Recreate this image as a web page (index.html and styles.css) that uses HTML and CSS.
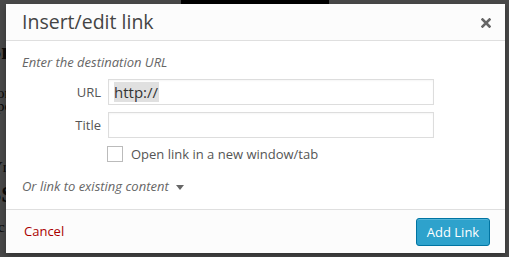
FILE: index.html
```html
<!DOCTYPE html>
<html lang="en">
<head>
    <meta charset="UTF-8">
    <meta name="viewport" content="width=device-width, initial-scale=1.0">
    <title>Insert/edit link</title>
    <link rel="stylesheet" href="styles.css">
</head>
<body>
    <div class="page">
        <div class="topbar"></div>
        <h2 class="page-head">Sn</h2>
        <p class="page-line l1">one of the things that nobody tells you about</p>
        <p class="page-line l2">poi</p>
        <p class="page-line l3">Yrs</p>
        <h2 class="page-head h2">SS</h2>
        <p class="page-line l4">c question is just one of those things</p>
        <p class="page-line l5">T publish the post for them in time for. Avoid using three hyphens to form a dash because</p>
    </div>
    <div class="backdrop"></div>

    <div class="dialog">
        <div class="dialog-head">
            <h1>Insert/edit link</h1>
            <span class="close">
                <svg width="10" height="10" viewBox="0 0 10 10">
                    <path d="M1.5 1.5 L8.5 8.5 M8.5 1.5 L1.5 8.5" stroke="#666" stroke-width="2.6" stroke-linecap="square"/>
                </svg>
            </span>
        </div>
        <div class="dialog-body">
            <p class="hint">Enter the destination URL</p>
            <div class="row">
                <label>URL</label>
                <div class="field"><span class="selected">http://</span></div>
            </div>
            <div class="row">
                <label>Title</label>
                <div class="field"></div>
            </div>
            <div class="row check-row">
                <span class="check"></span>
                <span>Open link in a new window/tab</span>
            </div>
            <p class="toggle">Or link to existing content <span class="arrow"></span></p>
        </div>
        <div class="dialog-foot">
            <a class="cancel">Cancel</a>
            <button class="btn">Add Link</button>
        </div>
    </div>
</body>
</html>
```

FILE: styles.css
```css
body,h1,h2,p{
    margin: 0;
    padding: 0;
}
body{
    width: 509px;
    height: 257px;
    overflow: hidden;
    position: relative;
    background: #f1f1f1;
    font-family: "Open Sans", "Noto Sans", sans-serif;
}
.page{
    font-family: "Liberation Serif", serif;
    color: #222;
    width: 509px;
    height: 257px;
    overflow: hidden;
}
.topbar{
    width: 148px;
    height: 4px;
    margin-left: 181px;
    background: #000;
}
.page-head{
    font-size: 24px;
    line-height: 30px;
    margin-top: 32px;
    margin-left: -12px;
}
.page-head.h2{
    margin-top: 4px;
}
.page-line{
    font-size: 15px;
    line-height: 16px;
    margin-left: -3px;
    white-space: nowrap;
}
.l1{ margin-top: 19px; }
.l2{ margin-top: -3px; }
.l3{ margin-top: 45px; margin-left: -8px; }
.l4{ margin-top: 10px; margin-left: -2px; }
.l5{ margin-top: 21px; margin-left: 0; }

.backdrop{
    position: absolute;
    left: 0; top: 0; right: 0; bottom: 0;
    background: rgba(0,0,0,0.7);
}
.dialog{
    position: absolute;
    left: 6px;
    top: 4px;
    width: 499px;
    height: 249px;
    background: #fff;
    box-shadow: 0 3px 6px rgba(0,0,0,0.3);
    display: flex;
    flex-direction: column;
}
.dialog-head{
    height: 36px;
    background: #fcfcfc;
    border-bottom: 1px solid #dfdfdf;
    display: flex;
    align-items: center;
    justify-content: space-between;
    padding: 0 14px 0 16px;
}
.dialog-head h1{
    font-size: 19.5px;
    font-weight: 400;
    color: #444;
    line-height: 24px;
    margin-top: 0;
}
.close{
    display: flex;
    margin-top: 1px;
}
.dialog-body{
    flex: 1;
    padding: 12px 16px 0 16px;
    font-size: 13px;
    color: #555;
}
.hint{
    font-style: italic;
    color: #666;
    line-height: 18px;
}
.row{
    display: flex;
    align-items: center;
    margin-top: 7px;
}
.row:first-of-type{
    margin-top: 8px;
}
.row label{
    width: 79px;
    padding-right: 7px;
    text-align: right;
    color: #555;
}
.field{
    box-sizing: border-box;
    width: 326px;
    height: 26px;
    border: 1px solid #ddd;
    box-shadow: inset 0 1px 2px rgba(0,0,0,0.04);
    display: flex;
    align-items: center;
    padding-left: 5px;
    font-size: 15px;
    color: #333;
}
.selected{
    background: #e0e0e0;
    line-height: 20px;
    padding-right: 1px;
}
.check-row{
    margin-top: 7px;
    padding-left: 85px;
    color: #555;
}
.check{
    width: 14px;
    height: 14px;
    border: 1px solid #bbb;
    background: #fff;
    margin-right: 8px;
}
.toggle{
    margin-top: 14px;
    font-style: italic;
    color: #666;
    line-height: 18px;
    display: flex;
    align-items: center;
}
.arrow{
    width: 0;
    height: 0;
    border-left: 4px solid transparent;
    border-right: 4px solid transparent;
    border-top: 5px solid #666;
    margin-left: 7px;
    margin-top: 2px;
}
.dialog-foot{
    height: 43px;
    background: #fcfcfc;
    border-top: 1px solid #dfdfdf;
    display: flex;
    align-items: flex-start;
    justify-content: space-between;
    padding: 0 15px 0 18px;
}
.cancel{
    color: #a00;
    font-size: 13px;
    margin-top: 12px;
    cursor: pointer;
}
.btn{
    margin-top: 8px;
    height: 28px;
    width: 74px;
    padding: 0;
    background: #2ea2cc;
    border: 1px solid #0074a2;
    border-radius: 3px;
    box-shadow: inset 0 1px 0 rgba(120,200,230,0.5);
    color: #fff;
    font-family: "Open Sans", "Noto Sans", sans-serif;
    font-size: 13px;
    cursor: pointer;
}
```
